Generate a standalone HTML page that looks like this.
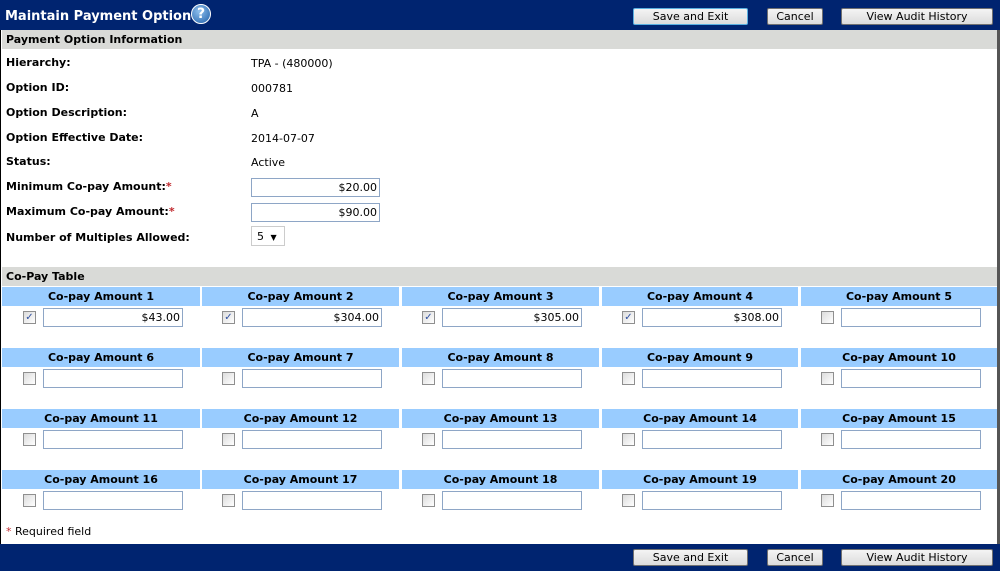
<!DOCTYPE html><html><head><style>
*{margin:0;padding:0;box-sizing:border-box}
body{width:1000px;height:571px;overflow:hidden;background:#fff;font-family:"DejaVu Sans",Verdana,sans-serif;font-size:11px;color:#000;position:relative}
.a{position:absolute}
.bar{background:#002470;left:0;width:1000px}
.gray{background:#d9dad7;left:2px;width:995px;height:19px;font-weight:bold;font-size:11px;padding:3px 4px;}
.btn{position:absolute;height:17px;border:1px solid #707070;border-radius:2px;background:linear-gradient(#f4f4f4,#dcdcdc);font-size:11px;text-align:center;line-height:15px;color:#000}
.lbl{position:absolute;left:6px;font-weight:bold}
.val{position:absolute;left:251px}
.inp{position:absolute;border:1px solid #8ea6c6;height:19px;background:#fff;text-align:right;padding-right:2px;line-height:17px;font-size:11px}
.hd{position:absolute;background:#99ccff;height:19px;font-weight:bold;text-align:center;line-height:19px}
.cb{position:absolute;width:13px;height:13px;border:1px solid #8f8f8f;background:linear-gradient(135deg,#dcdcdc,#fff);font-size:10px;line-height:11px;text-align:center;color:#3050a0}
.r{color:#c0282d}
</style></head><body>
<div class="a" style="left:0;top:0;width:1000px;height:571px;border:1px solid #000;border-right:3px solid #555;border-bottom:2px solid #000"></div>
<div class="a bar" style="top:0;height:30px"></div>
<div class="a" style="left:5px;top:9px;color:#fff;font-weight:bold;font-size:13px">Maintain Payment Option</div>
<div class="a" style="left:191px;top:4px;width:20px;height:20px;border-radius:50%;background:radial-gradient(circle at 40% 35%,#8fc0ee,#1f5fa8);border:1px solid #fff;color:#fff;font-weight:bold;font-size:14px;text-align:center;line-height:18px">?</div>
<div class="btn" style="left:633px;top:8px;width:115px;border-color:#5ab0e0">Save and Exit</div>
<div class="btn" style="left:767px;top:8px;width:56px">Cancel</div>
<div class="btn" style="left:841px;top:8px;width:152px">View Audit History</div>
<div class="a gray" style="top:30px">Payment Option Information</div>
<div class="lbl" style="top:56px">Hierarchy:</div><div class="val" style="top:57px">TPA - (480000)</div>
<div class="lbl" style="top:81px">Option ID:</div><div class="val" style="top:82px">000781</div>
<div class="lbl" style="top:106px">Option Description:</div><div class="val" style="top:107px">A</div>
<div class="lbl" style="top:131px">Option Effective Date:</div><div class="val" style="top:132px">2014-07-07</div>
<div class="lbl" style="top:155px">Status:</div><div class="val" style="top:156px">Active</div>
<div class="lbl" style="top:180px">Minimum Co-pay Amount:<span class="r">*</span></div>
<div class="inp" style="left:251px;top:178px;width:129px">$20.00</div>
<div class="lbl" style="top:205px">Maximum Co-pay Amount:<span class="r">*</span></div>
<div class="inp" style="left:251px;top:203px;width:129px">$90.00</div>
<div class="lbl" style="top:231px">Number of Multiples Allowed:</div>
<div class="a" style="left:251px;top:226px;width:34px;height:20px;border:1px solid #ccc;padding:3px 5px;font-size:11px">5 <span style="font-size:8px;margin-left:3px">▼</span></div>
<div class="a gray" style="top:267px">Co-Pay Table</div>

<div class="hd" style="left:2px;top:287px;width:198px">Co-pay Amount 1</div><div class="cb" style="left:23px;top:311px">✓</div><div class="inp" style="left:43px;top:308px;width:140px">$43.00</div>
<div class="hd" style="left:202px;top:287px;width:197px">Co-pay Amount 2</div><div class="cb" style="left:222px;top:311px">✓</div><div class="inp" style="left:242px;top:308px;width:140px">$304.00</div>
<div class="hd" style="left:402px;top:287px;width:197px">Co-pay Amount 3</div><div class="cb" style="left:422px;top:311px">✓</div><div class="inp" style="left:442px;top:308px;width:140px">$305.00</div>
<div class="hd" style="left:602px;top:287px;width:196px">Co-pay Amount 4</div><div class="cb" style="left:622px;top:311px">✓</div><div class="inp" style="left:642px;top:308px;width:140px">$308.00</div>
<div class="hd" style="left:801px;top:287px;width:196px">Co-pay Amount 5</div><div class="cb" style="left:821px;top:311px"></div><div class="inp" style="left:841px;top:308px;width:140px"></div>

<div class="hd" style="left:2px;top:348px;width:198px">Co-pay Amount 6</div><div class="cb" style="left:23px;top:372px"></div><div class="inp" style="left:43px;top:369px;width:140px"></div>
<div class="hd" style="left:202px;top:348px;width:197px">Co-pay Amount 7</div><div class="cb" style="left:222px;top:372px"></div><div class="inp" style="left:242px;top:369px;width:140px"></div>
<div class="hd" style="left:402px;top:348px;width:197px">Co-pay Amount 8</div><div class="cb" style="left:422px;top:372px"></div><div class="inp" style="left:442px;top:369px;width:140px"></div>
<div class="hd" style="left:602px;top:348px;width:196px">Co-pay Amount 9</div><div class="cb" style="left:622px;top:372px"></div><div class="inp" style="left:642px;top:369px;width:140px"></div>
<div class="hd" style="left:801px;top:348px;width:196px">Co-pay Amount 10</div><div class="cb" style="left:821px;top:372px"></div><div class="inp" style="left:841px;top:369px;width:140px"></div>

<div class="hd" style="left:2px;top:409px;width:198px">Co-pay Amount 11</div><div class="cb" style="left:23px;top:433px"></div><div class="inp" style="left:43px;top:430px;width:140px"></div>
<div class="hd" style="left:202px;top:409px;width:197px">Co-pay Amount 12</div><div class="cb" style="left:222px;top:433px"></div><div class="inp" style="left:242px;top:430px;width:140px"></div>
<div class="hd" style="left:402px;top:409px;width:197px">Co-pay Amount 13</div><div class="cb" style="left:422px;top:433px"></div><div class="inp" style="left:442px;top:430px;width:140px"></div>
<div class="hd" style="left:602px;top:409px;width:196px">Co-pay Amount 14</div><div class="cb" style="left:622px;top:433px"></div><div class="inp" style="left:642px;top:430px;width:140px"></div>
<div class="hd" style="left:801px;top:409px;width:196px">Co-pay Amount 15</div><div class="cb" style="left:821px;top:433px"></div><div class="inp" style="left:841px;top:430px;width:140px"></div>

<div class="hd" style="left:2px;top:470px;width:198px">Co-pay Amount 16</div><div class="cb" style="left:23px;top:494px"></div><div class="inp" style="left:43px;top:491px;width:140px"></div>
<div class="hd" style="left:202px;top:470px;width:197px">Co-pay Amount 17</div><div class="cb" style="left:222px;top:494px"></div><div class="inp" style="left:242px;top:491px;width:140px"></div>
<div class="hd" style="left:402px;top:470px;width:197px">Co-pay Amount 18</div><div class="cb" style="left:422px;top:494px"></div><div class="inp" style="left:442px;top:491px;width:140px"></div>
<div class="hd" style="left:602px;top:470px;width:196px">Co-pay Amount 19</div><div class="cb" style="left:622px;top:494px"></div><div class="inp" style="left:642px;top:491px;width:140px"></div>
<div class="hd" style="left:801px;top:470px;width:196px">Co-pay Amount 20</div><div class="cb" style="left:821px;top:494px"></div><div class="inp" style="left:841px;top:491px;width:140px"></div>

<div class="a" style="left:6px;top:525px"><span class="r">*</span> Required field</div>
<div class="a bar" style="top:544px;height:27px"></div>
<div class="btn" style="left:633px;top:549px;width:115px">Save and Exit</div>
<div class="btn" style="left:767px;top:549px;width:56px">Cancel</div>
<div class="btn" style="left:841px;top:549px;width:152px">View Audit History</div>
</body></html>
